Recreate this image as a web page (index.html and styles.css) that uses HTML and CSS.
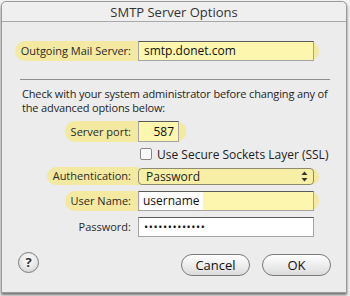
FILE: index.html
```html
<!DOCTYPE html>
<html lang="en">
<head>
    <meta charset="UTF-8">
    <title>SMTP Server Options</title>
    <link rel="stylesheet" href="styles.css">
</head>
<body>
    <div class="window">
        <div class="titlebar">SMTP Server Options</div>

        <div class="row row-first">
            <div class="lab-cell"><span class="lab hl">Outgoing Mail Server:</span></div>
            <div class="ctl hl"><div class="field wide">smtp.donet.com</div></div>
        </div>

        <div class="sep"></div>

        <p class="note">Check with your system administrator before changing any of the advanced options below:</p>

        <div class="row row-port">
            <div class="lab-cell"><span class="lab hl">Server port:</span></div>
            <div class="ctl hl port-wrap"><div class="field port">587</div></div>
        </div>

        <div class="row row-check">
            <div class="lab-cell"></div>
            <span class="checkbox"></span>
            <span class="check-label">Use Secure Sockets Layer (SSL)</span>
        </div>

        <div class="row row-auth">
            <div class="lab-cell"><span class="lab hl">Authentication:</span></div>
            <div class="ctl hl">
                <div class="popup">
                    <span>Password</span>
                    <svg width="7" height="11" viewBox="0 0 7 11">
                        <path d="M3.5 0.5 L6.5 4 L0.5 4 Z" fill="#333"/>
                        <path d="M3.5 10.5 L6.5 7 L0.5 7 Z" fill="#333"/>
                    </svg>
                </div>
            </div>
        </div>

        <div class="row row-user">
            <div class="lab-cell"><span class="lab hl">User Name:</span></div>
            <div class="ctl hl"><div class="field wide"><span class="typed">username</span></div></div>
        </div>

        <div class="row row-pass">
            <div class="lab-cell"><span class="lab">Password:</span></div>
            <div class="ctl"><div class="field wide white dots">•••••••••••••</div></div>
        </div>

        <div class="buttons">
            <button class="help">?</button>
            <div class="spacer"></div>
            <button class="btn">Cancel</button>
            <button class="btn">OK</button>
        </div>
    </div>
</body>
</html>
```

FILE: styles.css
```css
* {
    box-sizing: border-box;
}
body {
    margin: 0;
    width: 350px;
    height: 296px;
    overflow: hidden;
    background-color: #f3f3f3;
    font-family: "Open Sans", "DejaVu Sans", sans-serif;
    font-size: 11px;
    color: #1e1e1e;
}
.window {
    margin: 1px 0 0 1px;
    width: 346px;
    height: 292px;
    border: 1px solid #9a9a9a;
    border-radius: 5px 5px 0 0;
    background-color: #ececec;
    box-shadow: 0 2px 3px rgba(0,0,0,0.55);
}
.titlebar {
    height: 20px;
    border-bottom: 1px solid #a9a9a9;
    background-color: #efefef;
    border-radius: 5px 5px 0 0;
    text-align: center;
    font-size: 13px;
    line-height: 20px;
    color: #333;
}
.row {
    display: flex;
    align-items: center;
}
.lab-cell {
    width: 136px;
    flex: none;
    display: flex;
    justify-content: flex-end;
}
.lab {
    display: block;
    height: 100%;
    padding: 0 7px 0 6px;
    border-radius: 10px 0 0 10px;
    color: #2a2a2a;
}
.hl {
    background-color: #f3e9a0;
}
.ctl {
    display: flex;
    align-items: center;
    padding-right: 5px;
    border-radius: 0 10px 10px 0;
}
.row-first {
    margin-top: 19px;
    height: 20px;
}
.row-first .lab, .row-user .lab {
    line-height: 20px;
}
.field {
    height: 20px;
    border: 1px solid #a4a4a4;
    border-top-color: #5b5b5b;
    background-color: #fdf6ae;
    padding: 0 5px;
    line-height: 18px;
    font-size: 12px;
    color: #111;
}
.wide {
    width: 176px;
}
.white {
    background-color: #fff;
}
.sep {
    margin: 18px 0 0 18px;
    width: 310px;
    height: 1px;
    background-color: #8e8e8e;
}
.note {
    margin: 7px 0 0 20px;
    width: 322px;
    line-height: 14px;
    letter-spacing: -0.15px;
}
.row-port {
    margin-top: 6px;
    height: 21px;
}
.row-port .lab {
    line-height: 21px;
}
.port-wrap {
    padding-right: 7px;
}
.field.port {
    width: 41px;
    height: 21px;
    text-align: right;
    padding-right: 4px;
    line-height: 19px;
}
.row-check {
    margin-top: 6px;
    height: 12px;
}
.checkbox {
    width: 12px;
    height: 12px;
    margin-left: 2px;
    border: 1px solid #888;
    border-radius: 2px;
    background-color: #fafafa;
}
.check-label {
    margin-left: 5px;
    font-size: 12px;
    color: #222;
}
.row-auth {
    margin-top: 7px;
    height: 18px;
}
.row-auth .lab {
    line-height: 18px;
}
.popup {
    width: 176px;
    height: 17px;
    border: 1px solid #8d8a70;
    border-radius: 4px;
    background-color: #f8efa6;
    display: flex;
    align-items: center;
    justify-content: space-between;
    padding: 0 5px 0 7px;
    font-size: 12px;
    color: #222;
}
.row-user {
    margin-top: 6px;
    height: 20px;
}
.typed {
    display: inline-block;
    background-color: #fff;
    margin-left: -4px;
    padding: 0 3px;
}
.row-pass {
    margin-top: 6px;
    height: 20px;
}
.row-pass .lab {
    line-height: 20px;
}
.dots {
    letter-spacing: 0.6px;
    font-size: 11px;
}
.buttons {
    margin-top: 17px;
    padding: 0 15px 0 16px;
    display: flex;
    align-items: center;
}
.spacer {
    flex: 1;
}
button {
    font-family: "Open Sans", "DejaVu Sans", sans-serif;
    cursor: pointer;
}
.help {
    width: 21px;
    height: 21px;
    margin-top: -5px;
    padding: 0;
    border: 1px solid #7c7c7c;
    border-radius: 50%;
    background: radial-gradient(circle at 50% 35%, #ffffff 0%, #e4e4e4 60%, #c4c4c4 100%);
    font-size: 13px;
    font-weight: bold;
    color: #333;
    line-height: 19px;
}
.btn {
    width: 69px;
    height: 22px;
    margin-left: 12px;
    padding: 0;
    border: 1px solid #7a7a7a;
    border-radius: 11px;
    background: linear-gradient(#ffffff, #ececec 55%, #dcdcdc);
    font-size: 13px;
    color: #111;
    line-height: 20px;
}
```
